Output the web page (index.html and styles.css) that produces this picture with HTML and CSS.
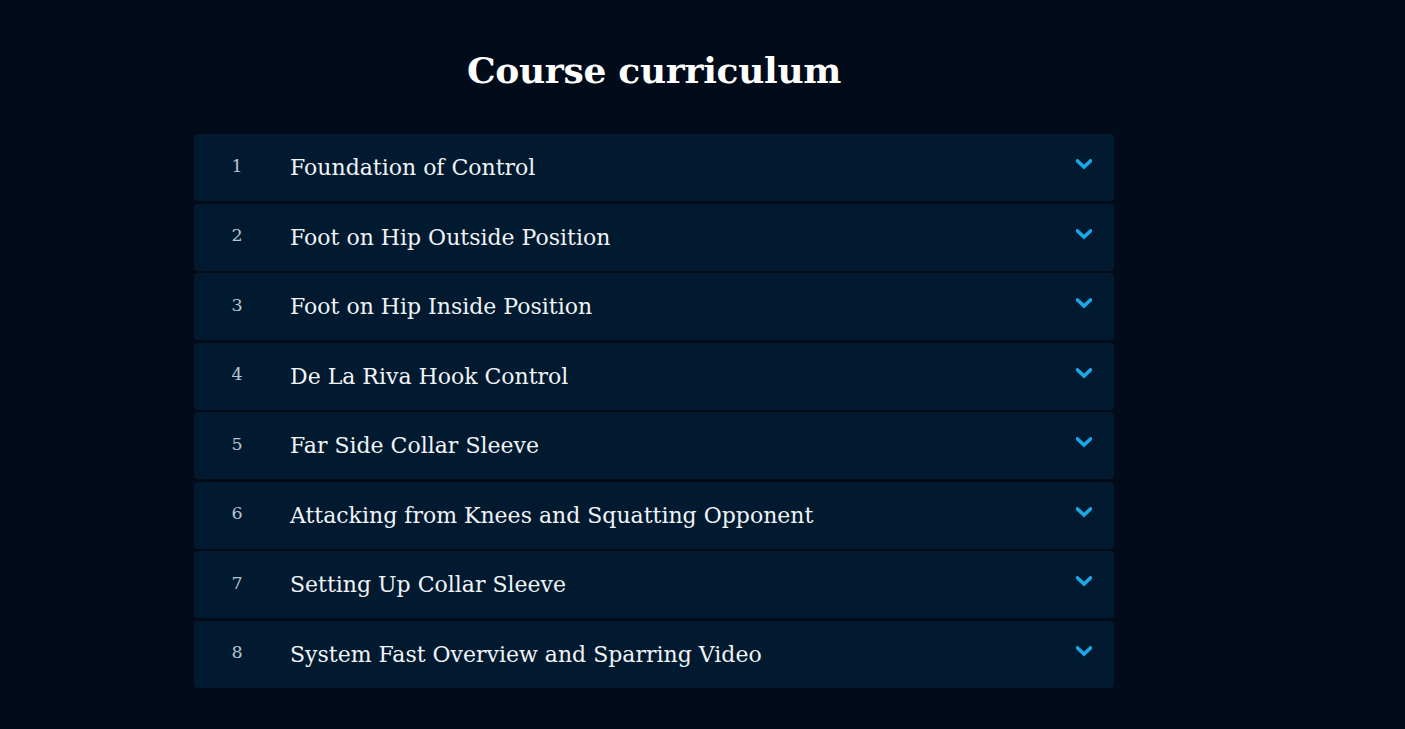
FILE: index.html
```html
<!DOCTYPE html>
<html lang="en">
<head>
<meta charset="utf-8">
<title>Course curriculum</title>
<link rel="stylesheet" href="styles.css">
</head>
<body>
<main class="curriculum">
  <h2 class="title">Course curriculum</h2>
  <ul class="list">
    <li class="item"><span class="num">1</span><span class="name">Foundation of Control</span><svg class="chev" viewBox="0 0 16 11"><path d="M1.5 2 L8 8 L14.5 2" /></svg></li>
    <li class="item"><span class="num">2</span><span class="name">Foot on Hip Outside Position</span><svg class="chev" viewBox="0 0 16 11"><path d="M1.5 2 L8 8 L14.5 2" /></svg></li>
    <li class="item"><span class="num">3</span><span class="name">Foot on Hip Inside Position</span><svg class="chev" viewBox="0 0 16 11"><path d="M1.5 2 L8 8 L14.5 2" /></svg></li>
    <li class="item"><span class="num">4</span><span class="name">De La Riva Hook Control</span><svg class="chev" viewBox="0 0 16 11"><path d="M1.5 2 L8 8 L14.5 2" /></svg></li>
    <li class="item"><span class="num">5</span><span class="name">Far Side Collar Sleeve</span><svg class="chev" viewBox="0 0 16 11"><path d="M1.5 2 L8 8 L14.5 2" /></svg></li>
    <li class="item"><span class="num">6</span><span class="name">Attacking from Knees and Squatting Opponent</span><svg class="chev" viewBox="0 0 16 11"><path d="M1.5 2 L8 8 L14.5 2" /></svg></li>
    <li class="item"><span class="num">7</span><span class="name">Setting Up Collar Sleeve</span><svg class="chev" viewBox="0 0 16 11"><path d="M1.5 2 L8 8 L14.5 2" /></svg></li>
    <li class="item"><span class="num">8</span><span class="name">System Fast Overview and Sparring Video</span><svg class="chev" viewBox="0 0 16 11"><path d="M1.5 2 L8 8 L14.5 2" /></svg></li>
  </ul>
</main>
</body>
</html>
```
FILE: styles.css
```css
html, body {
  margin: 0;
  padding: 0;
}
body {
  background: #020b1a;
  font-family: "DejaVu Serif", "Liberation Serif", serif;
  color: #f2f4f7;
  height: 729px;
  overflow: hidden;
}
.curriculum {
  width: 920px;
  margin-left: 194px;
  padding-top: 44px;
}
.title {
  margin: 0 0 38px;
  text-align: center;
  font-size: 36px;
  line-height: 52px;
  font-weight: bold;
  color: #ffffff;
  letter-spacing: -0.3px;
}
.list {
  list-style: none;
  margin: 0;
  padding: 0;
  display: flex;
  flex-direction: column;
  gap: 2.5px;
}
.item {
  height: 67px;
  display: flex;
  align-items: center;
  background: #011a2f;
  border-radius: 4px;
  padding: 0 22px 0 0;
  box-sizing: border-box;
}
.num {
  width: 86px;
  margin-right: 10px;
  text-align: center;
  font-size: 17.5px;
  color: #b9c5d2;
  margin-top: -4px;
}
.name {
  flex: 1;
  font-size: 22px;
  color: #f0f3f7;
  letter-spacing: 0;
}
.chev {
  width: 16px;
  height: 11px;
  margin-top: -6px;
  fill: none;
  stroke: #1ba6e8;
  stroke-width: 3.6;
  stroke-linecap: square;
  stroke-linejoin: miter;
}
```
